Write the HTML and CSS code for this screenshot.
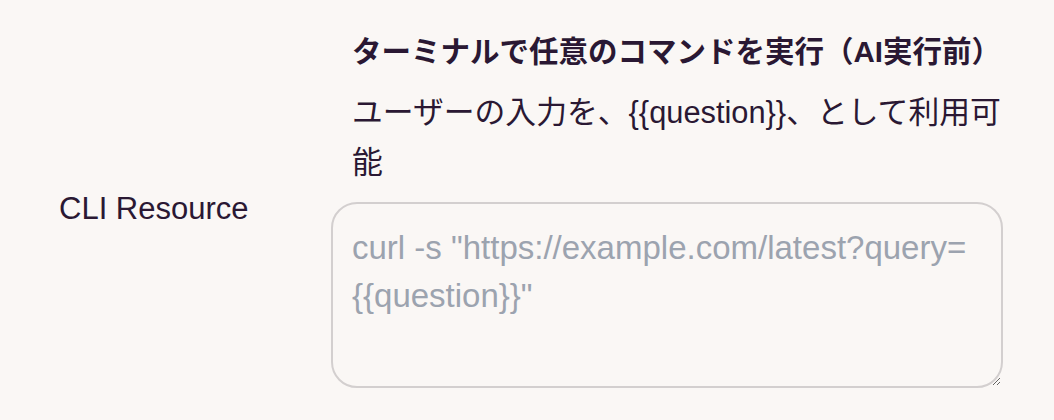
FILE: index.html
```html
<!DOCTYPE html>
<html lang="ja">
<head>
<meta charset="utf-8">
<link rel="stylesheet" href="styles.css">
</head>
<body>
<div class="row">
  <div class="label">CLI Resource</div>
  <div class="field">
    <div class="title">ターミナルで任意のコマンドを実行（AI実行前）</div>
    <div class="desc">ユーザーの入力を、{{question}}、として利用可能</div>
    <textarea class="input" placeholder='curl -s "https://example.com/latest?query={{question}}"'></textarea>
  </div>
</div>
</body>
</html>
```
FILE: styles.css
```css
html, body {
  margin: 0;
  padding: 0;
  background: #faf7f5;
}
body {
  font-family: "Liberation Sans", "Noto Sans CJK JP", sans-serif;
  color: #2a1833;
}
.row {
  display: flex;
  align-items: center;
  padding: 30px 0 0 59px;
}
.label {
  width: 272px;
  flex: none;
  font-size: 31px;
  line-height: 40px;
}
.field {
  width: 672px;
  display: flex;
  flex-direction: column;
}
.title {
  padding-left: 21px;
  font-size: 29.5px;
  font-weight: bold;
  line-height: 44px;
}
.desc {
  padding-left: 21px;
  margin-top: 14px;
  font-size: 30.8px;
  line-height: 50px;
}
.input {
  margin-top: 14px;
  box-sizing: border-box;
  width: 672px;
  height: 186px;
  padding: 20px 19px;
  border: 2px solid #d3cfcf;
  border-radius: 26px;
  background: #faf7f5;
  font-family: "Liberation Sans", "Noto Sans CJK JP", sans-serif;
  font-size: 33px;
  line-height: 48px;
  color: #2a1833;
  outline: none;
}
.input::placeholder {
  color: #9ca3af;
  opacity: 1;
}
```
